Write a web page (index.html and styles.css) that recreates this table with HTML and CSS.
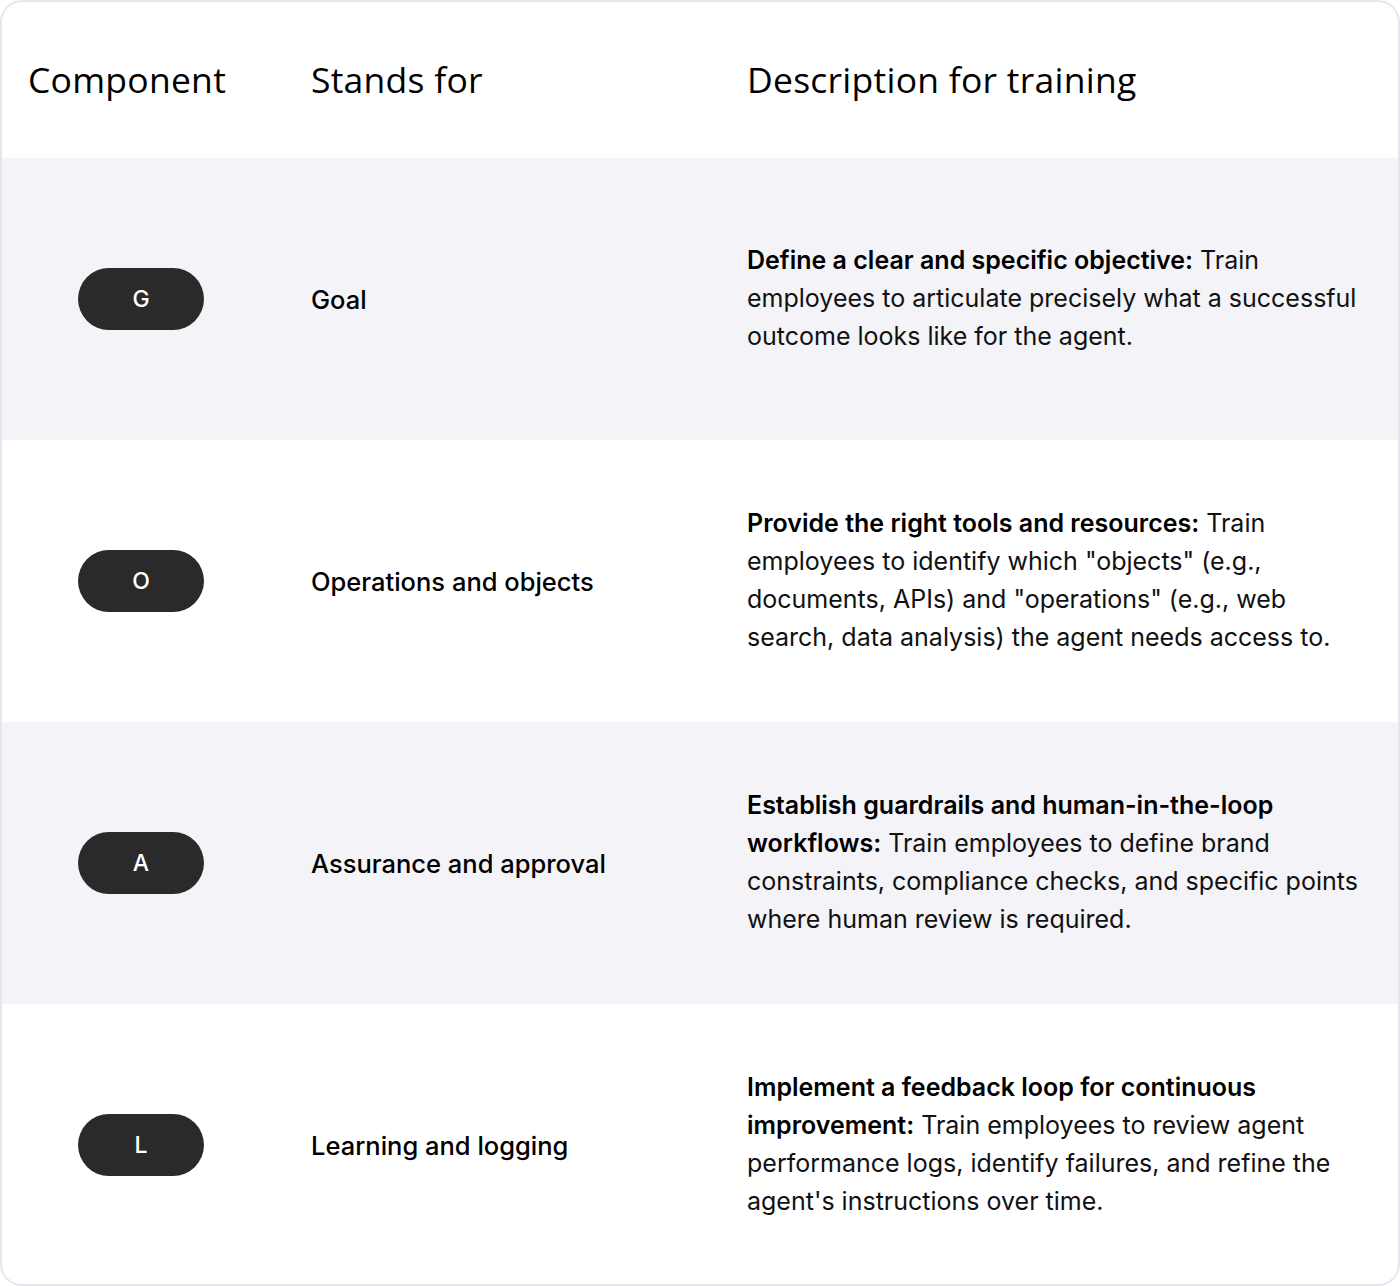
FILE: index.html
```html
<!DOCTYPE html>
<html>
<head>
<meta charset="utf-8">
<link rel="stylesheet" href="styles.css">
</head>
<body>
<div class="card">
  <div class="row head">
    <div class="c1 h">Component</div>
    <div class="c2 h">Stands for</div>
    <div class="c3 h">Description for training</div>
  </div>
  <div class="row alt">
    <div class="c1"><span class="pill">G</span></div>
    <div class="c2 name">Goal</div>
    <div class="c3 desc"><b>Define a clear and specific objective:</b> Train employees to articulate precisely what a successful outcome looks like for the agent.</div>
  </div>
  <div class="row">
    <div class="c1"><span class="pill">O</span></div>
    <div class="c2 name">Operations and objects</div>
    <div class="c3 desc"><b>Provide the right tools and resources:</b> Train employees to identify which "objects" (e.g., documents, APIs) and "operations" (e.g., web search, data analysis) the agent needs access to.</div>
  </div>
  <div class="row alt">
    <div class="c1"><span class="pill">A</span></div>
    <div class="c2 name">Assurance and approval</div>
    <div class="c3 desc"><b>Establish guardrails and human-in-the-loop workflows:</b> Train employees to define brand constraints, compliance checks, and specific points where human review is required.</div>
  </div>
  <div class="row">
    <div class="c1"><span class="pill">L</span></div>
    <div class="c2 name">Learning and logging</div>
    <div class="c3 desc"><b>Implement a feedback loop for continuous improvement:</b> Train employees to review agent performance logs, identify failures, and refine the agent's instructions over time.</div>
  </div>
</div>
</body>
</html>
```
FILE: styles.css
```css
html, body { margin: 0; padding: 0; background: #fff; }
body { font-family: Inter, "Liberation Sans", sans-serif; color: #111; }
.card {
  width: 1400px;
  height: 1286px;
  box-sizing: border-box;
  border: 2px solid #e6e7ee;
  border-radius: 22px;
  overflow: hidden;
  background: #fff;
}
.row {
  display: grid;
  grid-template-columns: 309px 436px 1fr;
  align-items: center;
  height: 282px;
}
.row.head { height: 156px; }
.row.alt { background: #f3f3f8; }
.c1 { padding-left: 26px; }
.h { font-family: "Open Sans", Inter, sans-serif; font-size: 35.5px; font-weight: 500; color: #000; letter-spacing: 0.25px; padding-bottom: 2px; }
.row:not(.head) .c1 { padding-left: 76px; }
.pill {
  display: flex;
  align-items: center;
  justify-content: center;
  width: 126px;
  height: 62px;
  border-radius: 31px;
  background: #2a2a2a;
  color: #fff;
  font-size: 23px;
  font-weight: 500;
}
.name { font-size: 25.5px; font-weight: 500; color: #000; }
.desc { font-size: 25px; line-height: 38px; color: #111; padding-right: 32px; padding-bottom: 2px; }
.desc b { font-weight: 600; color: #000; }
```
